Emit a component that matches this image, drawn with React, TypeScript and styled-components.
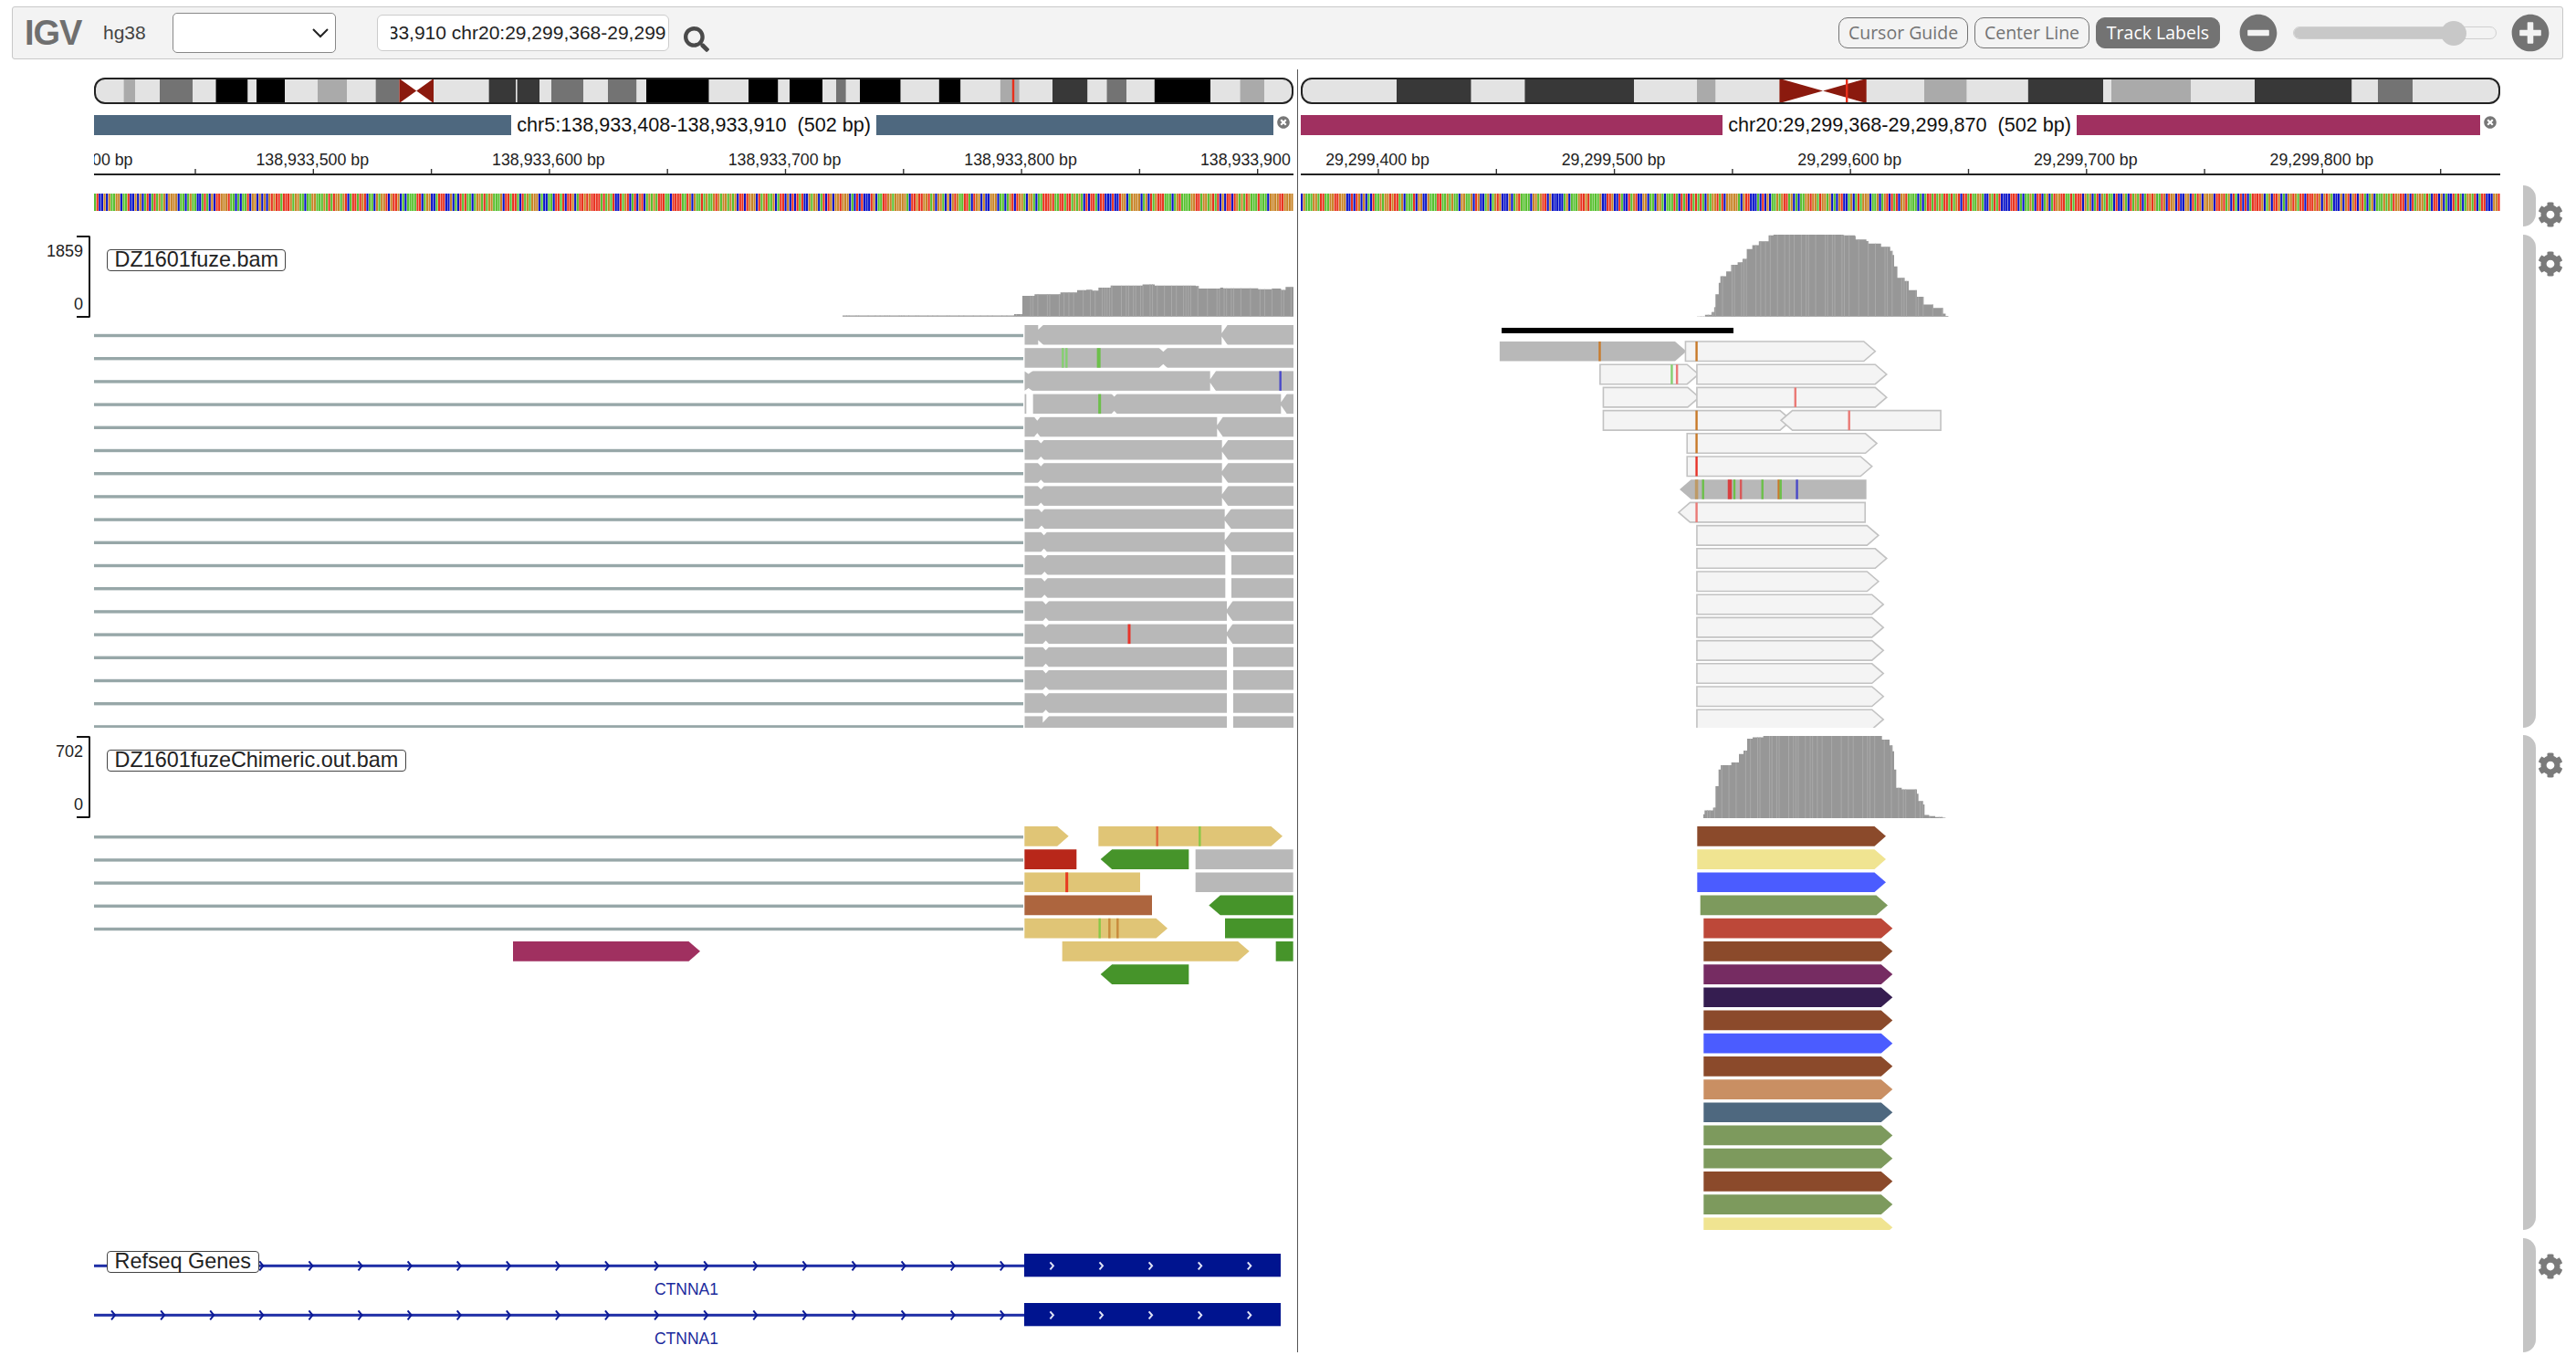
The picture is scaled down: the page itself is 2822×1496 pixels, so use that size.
import React from 'react';
import styled, {createGlobalStyle} from 'styled-components';
import {FaCog, FaMinusCircle, FaPlusCircle, FaSearch, FaTimesCircle} from 'react-icons/fa';

const LEFT_X = 103;
const RIGHT_X = 1425;
const PANEL_W = 1314;
const BP_W = PANEL_W / 502;

// band colours
const L = '#e3e3e3';
const M = '#aaaaaa';
const D = '#737373';
const H = '#383838';
const K = '#000000';
const CENTRO = '#8b1a0e';

const GRAY_READ = '#b8b8b8';
const TAN = '#e0c576';
const GREEN = '#46942a';
const BROWN = '#8b4a2b';
const KHAKI = '#f0e491';
const BLUE = '#4b5cff';
const OLIVE = '#7d9a5d';
const SLATE = '#4e687f';
const MAGENTA = '#a03060';

const MARK_GREEN = '#6cc04a';
const MARK_RED = '#e8342a';
const MARK_PINK = '#ea7a76';
const MARK_ORANGE = '#c87a2a';
const MARK_BLUE = '#4a4ac8';

type Seg = [number, string];

const leftBands: Seg[] = [
  [135.5, L], [148, M], [175, L], [211, D], [236.5, L], [271.5, K], [281, L], [312, K], [348, L],
  [380, M], [411.6, L], [437.4, D], [475, '#fff'], [535.6, L], [565, H], [566.6, L], [591, H],
  [604, L], [639, D], [666, L], [697.5, D], [708, L], [776.7, K], [820, L], [852.5, K], [865, L],
  [901, K], [916, L], [926.8, D], [942, L], [986.7, K], [1028.8, L], [1052.4, K], [1095.8, L],
  [1116.8, M], [1153, L], [1191.5, H], [1212.5, L], [1234, D], [1264.8, L], [1326, K], [1358.5, L],
  [1385, M], [1417, L],
];

const rightBands: Seg[] = [
  [1530, L], [1611.7, H], [1670.4, L], [1790, H], [1859, L], [1879.6, M], [1949.4, L],
  [2044.7, '#fff'], [2108, L], [2154.7, M], [2221.8, L], [2304, H], [2313, L], [2400, M],
  [2470, L], [2576.5, H], [2605, L], [2643, D], [2739, L],
];

const rng = (seed: number) => () => {
  seed = (seed * 1664525 + 1013904223) % 4294967296;
  return seed / 4294967296;
};

const baseColors = ['#58c030', '#0a14c8', '#c88428', '#e8321e'];

const makeBases = (seed: number) => {
  const r = rng(seed);
  return Array.from({length: 502}, () => baseColors[Math.floor(r() * 4)]);
};

const leftBases = makeBases(17);
const rightBases = makeBases(91);

// --- bam reads, left panel. measured off a 3x / 2.8x crop so kept in crop px
const cx = (p: number) => 1080 + p / 3;
const READ_H = 21.5;
const rowTop = (k: number) => 356 + 25.2 * k;

type Notch = {kind: 'L' | 'X' | 'gap'; a: number; b: number; d?: number};
type Mark = {at: number; color: string; w?: number};

const leftRows: {notches: Notch[]; marks?: Mark[]}[] = [
  {notches: [{kind: 'L', a: 172, b: 190, d: 5}, {kind: 'L', a: 775, b: 795, d: 9}]},
  {
    notches: [{kind: 'X', a: 568, b: 598, d: 4}],
    marks: [{at: 253, color: '#85cf70'}, {at: 265, color: '#85cf70'}, {at: 371, color: MARK_GREEN, w: 4}],
  },
  {notches: [{kind: 'X', a: 125, b: 155, d: 3}, {kind: 'L', a: 737, b: 757, d: 9}], marks: [{at: 968, color: MARK_BLUE}]},
  {
    notches: [{kind: 'gap', a: 133, b: 155}, {kind: 'X', a: 412, b: 432, d: 3}, {kind: 'L', a: 970, b: 990, d: 9}],
    marks: [{at: 374, color: MARK_GREEN, w: 3}],
  },
  {notches: [{kind: 'X', a: 158, b: 180, d: 4}, {kind: 'L', a: 760, b: 780, d: 9}]},
  {notches: [{kind: 'X', a: 170, b: 192, d: 3.5}, {kind: 'L', a: 776, b: 797, d: 9}]},
  {notches: [{kind: 'X', a: 170, b: 192, d: 3.5}, {kind: 'L', a: 776, b: 797, d: 9}]},
  {notches: [{kind: 'X', a: 170, b: 192, d: 3.5}, {kind: 'L', a: 776, b: 797, d: 9}]},
  {notches: [{kind: 'X', a: 172, b: 194, d: 3.5}, {kind: 'L', a: 785, b: 807, d: 9}]},
  {notches: [{kind: 'X', a: 180, b: 202, d: 3.5}, {kind: 'L', a: 785, b: 807, d: 9}]},
  {notches: [{kind: 'X', a: 182, b: 204, d: 3.5}, {kind: 'gap', a: 787, b: 807}]},
  {notches: [{kind: 'X', a: 182, b: 204, d: 3.5}, {kind: 'gap', a: 787, b: 807}]},
  {notches: [{kind: 'X', a: 186, b: 208, d: 3.5}, {kind: 'L', a: 792, b: 812, d: 9}]},
  {notches: [{kind: 'X', a: 186, b: 208, d: 3.5}, {kind: 'L', a: 792, b: 812, d: 9}], marks: [{at: 471, color: MARK_RED, w: 3}]},
  {notches: [{kind: 'X', a: 186, b: 208, d: 3.5}, {kind: 'gap', a: 792, b: 813}]},
  {notches: [{kind: 'X', a: 186, b: 208, d: 3.5}, {kind: 'gap', a: 792, b: 813}]},
  {notches: [{kind: 'X', a: 186, b: 208, d: 3.5}, {kind: 'gap', a: 792, b: 813}]},
  {notches: [{kind: 'L', a: 187, b: 208, d: 7}, {kind: 'gap', a: 792, b: 813}]},
];

// --- bam reads, right panel
const rx = (p: number) => 1600 + p / 2.8;
const rightRowTop = (k: number) => 374 + 25.2 * k;

type Read = {
  from: number;
  to: number;
  dir?: 'R' | 'L';
  filled?: boolean;
  marks?: Mark[];
};

const rightRows: Read[][] = [
  [
    {from: 120, to: 693, dir: 'R', filled: true, marks: [{at: 427, color: MARK_ORANGE}]},
    {from: 690, to: 1272, dir: 'R', marks: [{at: 724, color: MARK_ORANGE}]},
  ],
  [
    {from: 428, to: 730, dir: 'R', marks: [{at: 648, color: '#85cf70'}, {at: 664, color: MARK_PINK}]},
    {from: 725, to: 1307, dir: 'R'},
  ],
  [{from: 438, to: 732, dir: 'R'}, {from: 725, to: 1307, dir: 'R', marks: [{at: 1027, color: MARK_PINK}]}],
  [
    {from: 438, to: 1015, dir: 'R', marks: [{at: 724, color: MARK_ORANGE}]},
    {from: 983, to: 1473, dir: 'L', marks: [{at: 1192, color: MARK_PINK}]},
  ],
  [{from: 695, to: 1277, dir: 'R', marks: [{at: 724, color: MARK_ORANGE}]}],
  [{from: 695, to: 1262, dir: 'R', marks: [{at: 724, color: MARK_RED}]}],
  [
    {
      from: 672,
      to: 1245,
      dir: 'L',
      filled: true,
      marks: [
        {at: 724, color: '#bd9a66', w: 3.5},
        {at: 744, color: MARK_GREEN},
        {at: 826, color: '#d84040', w: 4.5},
        {at: 840, color: MARK_GREEN},
        {at: 860, color: '#d85a5a'},
        {at: 926, color: MARK_GREEN},
        {at: 976, color: MARK_ORANGE},
        {at: 982, color: MARK_GREEN},
        {at: 1032, color: MARK_BLUE},
      ],
    },
  ],
  [{from: 669, to: 1241, dir: 'L', marks: [{at: 724, color: MARK_PINK}]}],
  [{from: 725, to: 1282, dir: 'R'}],
  [{from: 725, to: 1307, dir: 'R'}],
  [{from: 725, to: 1282, dir: 'R'}],
  [{from: 725, to: 1297, dir: 'R'}],
  [{from: 725, to: 1297, dir: 'R'}],
  [{from: 725, to: 1297, dir: 'R'}],
  [{from: 725, to: 1297, dir: 'R'}],
  [{from: 725, to: 1297, dir: 'R'}],
  [{from: 725, to: 1297, dir: 'R'}],
];

// --- chimeric reads
const chimTop = (k: number) => 905 + 25.2 * k;

type ChimRead = {from: number; to: number; dir?: 'R' | 'L'; color: string; marks?: Mark[]};

const chimLeft: ChimRead[][] = [
  [
    {from: 127, to: 272, dir: 'R', color: TAN},
    {from: 370, to: 975, dir: 'R', color: TAN, marks: [{at: 563, color: '#e06a3c'}, {at: 703, color: '#88c848'}]},
  ],
  [
    {from: 127, to: 298, color: '#b8271a'},
    {from: 377, to: 667, dir: 'L', color: GREEN},
    {from: 689, to: 1010, color: GRAY_READ},
  ],
  [
    {from: 127, to: 507, color: TAN, marks: [{at: 266, color: '#e83a20', w: 3}]},
    {from: 689, to: 1010, color: GRAY_READ},
  ],
  [
    {from: 127, to: 546, color: '#ad653e'},
    {from: 733, to: 1010, dir: 'L', color: GREEN},
  ],
  [
    {
      from: 127,
      to: 597,
      dir: 'R',
      color: TAN,
      marks: [{at: 374, color: '#88c848'}, {at: 406, color: '#c88a3c'}, {at: 433, color: '#c88a3c'}],
    },
    {from: 786, to: 1010, color: GREEN},
  ],
  [
    {from: 251, to: 866, dir: 'R', color: TAN},
    {from: 953, to: 1010, color: GREEN},
  ],
  [{from: 377, to: 667, dir: 'L', color: GREEN}],
];

const chimRightColors = [
  BROWN, KHAKI, BLUE, OLIVE, '#bd4839', BROWN, '#762c62', '#351d50', BROWN, BLUE, BROWN, '#c98f63', SLATE, OLIVE,
  OLIVE, BROWN, OLIVE, KHAKI,
];

// --- coverage profiles [x, top]
const covLeft: [number, number][] = [
  [923, 345.6], [1110, 345.6], [1111, 344],
  ...([
    [120, 235], [160, 230], [245, 225], [300, 218], [330, 216], [350, 219], [370, 210], [410, 204], [515, 200],
    [555, 204], [690, 205], [700, 213], [770, 210], [780, 212], [895, 215], [940, 213], [970, 217], [985, 208],
  ] as [number, number][]).map(([p, q]): [number, number] => [cx(p), 240 + q / 2.8]),
];

const covRight: [number, number][] = ([
  [725, 298], [750, 293], [770, 285], [778, 270], [782, 230], [792, 195], [797, 175], [815, 160], [830, 140],
  [850, 132], [865, 122], [878, 92], [895, 80], [915, 68], [945, 50], [960, 47], [1170, 47], [1175, 50], [1210, 52],
  [1212, 62], [1245, 67], [1250, 75], [1290, 85], [1318, 97], [1325, 110], [1330, 145], [1340, 180], [1362, 190],
  [1375, 218], [1400, 238], [1420, 262], [1450, 272], [1480, 290], [1488, 297],
] as [number, number][]).map(([p, q]) => [rx(p), 240 + q / 2.8]);

const covChim: [number, number][] = ([
  [138, 280], [142, 268], [170, 260], [178, 195], [188, 145], [195, 132], [230, 124], [255, 98], [270, 88], [282, 52],
  [300, 48], [335, 44], [720, 44], [725, 55], [750, 72], [760, 90], [765, 145], [772, 200], [790, 205], [840, 218],
  [845, 240], [860, 250], [865, 282], [880, 285], [900, 288], [925, 290],
] as [number, number][]).map(([p, q]) => [1820 + p / 3, 790 + q / 2.75]);

const tickXs = (start: number) => Array.from({length: 10}, (_, i) => start + 129.3 * i);

const geneArrows = Array.from({length: 24}, (_, i) => 124 + 54.1 * i);

const GlobalStyle = createGlobalStyle`
  html, body {
    margin: 0;
    padding: 0;
    background: #fff;
  }
  body {
    width: 2822px;
    height: 1496px;
    overflow: hidden;
    font-family: "Liberation Sans", Arial, sans-serif;
    color: #222;
  }
`;

const Page = styled.div`
  position: relative;
  width: 2822px;
  height: 1496px;
  overflow: hidden;
`;

const Navbar = styled.header`
  box-sizing: border-box;
  display: flex;
  align-items: center;
  height: 58px;
  margin: 7px 14px 0 13px;
  padding: 0 14px 0 13px;
  background: #f3f3f3;
  border: 1.5px solid #c8c8c8;
  border-radius: 3px;
`;

const Logo = styled.div`
  width: 62px;
  font-size: 38px;
  font-weight: 700;
  letter-spacing: -1px;
  color: #6f6f6f;
`;

const Genome = styled.div`
  margin-left: 24px;
  font-size: 21px;
  color: #444;
`;

const SelectBox = styled.div`
  box-sizing: border-box;
  display: flex;
  align-items: center;
  justify-content: flex-end;
  width: 179px;
  height: 44px;
  margin-left: 29px;
  padding-right: 6px;
  background: #fff;
  border: 1px solid #888;
  border-radius: 5px;
`;

const LocusBox = styled.div`
  box-sizing: border-box;
  width: 320px;
  height: 40px;
  margin-left: 45px;
  padding: 0 3px 0 14px;
  background: #fff;
  border: 1px solid #ccc;
  border-radius: 6px;
`;

const LocusClip = styled.div`
  overflow: hidden;
  white-space: nowrap;
  font-size: 21px;
  line-height: 38px;
  color: #222;
`;

const LocusText = styled.span`
  margin-left: -226px;
`;

const SearchIcon = styled(FaSearch)`
  width: 28px;
  height: 28px;
  margin: 14px 0 0 16px;
  color: #4a4a4a;
`;

const NavRight = styled.div`
  display: flex;
  align-items: center;
  margin-left: auto;
`;

const ToggleButton = styled.div<{$on?: boolean; $width: number}>`
  box-sizing: border-box;
  width: ${p => p.$width}px;
  height: 34px;
  margin-right: 7px;
  text-align: center;
  font-family: "Open Sans", sans-serif;
  font-size: 19.5px;
  line-height: 32px;
  border: 1px solid #737373;
  border-radius: 10px;
  color: ${p => (p.$on ? '#fff' : '#737373')};
  background: ${p => (p.$on ? '#737373' : 'transparent')};
`;

const ZoomOut = styled(FaMinusCircle)`
  width: 42px;
  height: 42px;
  margin-left: 14px;
  color: #737373;
`;

const ZoomIn = styled(FaPlusCircle)`
  width: 42px;
  height: 42px;
  color: #737373;
`;

const SliderTrack = styled.div`
  position: relative;
  box-sizing: border-box;
  width: 223px;
  height: 14px;
  margin: 0 16px 0 17px;
  background: #f3f3f3;
  border: 1px solid #d0d0d0;
  border-radius: 7px;
`;

const SliderFill = styled.div<{$pct: number}>`
  height: 100%;
  width: ${p => p.$pct}%;
  background: #c8c8c8;
  border-radius: 7px 0 0 7px;
`;

const SliderThumb = styled.div<{$pct: number}>`
  position: absolute;
  top: -7px;
  left: ${p => p.$pct}%;
  width: 28px;
  height: 27px;
  margin-left: -14px;
  background: #c8c8c8;
  border-radius: 50%;
`;

const Divider = styled.div`
  position: absolute;
  left: 1421px;
  top: 76px;
  width: 1px;
  height: 1405px;
  background: #555;
`;

const PanelRow = styled.div<{$top: number; $height: number}>`
  display: flex;
  margin: ${p => p.$top}px 0 0 ${LEFT_X}px;
  height: ${p => p.$height}px;
`;

const Cell = styled.div`
  width: ${PANEL_W}px;
  & + & {
    margin-left: 8px;
  }
`;

const RegionCell = styled(Cell)`
  display: flex;
  align-items: stretch;
`;

const RegionBar = styled.div<{$color: string; $width?: number}>`
  background: ${p => p.$color};
  ${p => (p.$width ? `width: ${p.$width}px;` : 'flex: 1;')}
`;

const RegionText = styled.div`
  margin: 0 6px 0 6px;
  font-size: 21.6px;
  line-height: 22px;
  white-space: pre;
  color: #111;
`;

const CloseIcon = styled(FaTimesCircle)`
  width: 14px;
  height: 14px;
  margin: 1px 4px 0 4px;
  color: #777;
`;

const PlotSvg = styled.svg`
  display: block;
`;

const RulerLabel = styled.text`
  font-family: "Liberation Sans", Arial, sans-serif;
  font-size: 17.8px;
  fill: #222;
  text-anchor: middle;
`;

const GeneName = styled.text`
  font-family: "Liberation Sans", Arial, sans-serif;
  font-size: 17.5px;
  fill: #1c2a9c;
  text-anchor: middle;
`;

const TrackRow = styled.section<{$top: number; $height: number}>`
  display: flex;
  height: ${p => p.$height}px;
  margin-top: ${p => p.$top}px;
`;

const AxisCell = styled.div`
  display: flex;
  justify-content: flex-end;
  width: ${LEFT_X}px;
`;

const AxisBracket = styled.div`
  box-sizing: border-box;
  display: flex;
  flex-direction: column;
  justify-content: space-between;
  align-items: flex-end;
  width: 15px;
  height: 90px;
  margin: 1px 4px 0 0;
  padding: 5px 6px 3px 0;
  border: solid #111;
  border-width: 2px 2px 2px 0;
  border-radius: 0 2px 2px 0;
  font-size: 18px;
  line-height: 20px;
  color: #222;
`;

const TrackPanel = styled.div`
  position: relative;
  flex: none;
  width: ${PANEL_W}px;
  height: 100%;
  overflow: hidden;
  & + & {
    margin-left: 8px;
  }
`;

const SequencePanel = styled(TrackPanel)`
  padding-top: 9px;
`;

const TrackLabel = styled.div<{$top: number}>`
  position: absolute;
  left: 14px;
  top: ${p => p.$top}px;
  box-sizing: border-box;
  height: 24px;
  padding: 0 7.5px;
  font-size: 23.4px;
  line-height: 21px;
  white-space: nowrap;
  color: #222;
  background: #fff;
  border: 1px solid #444;
  border-radius: 4px;
`;

const SideControl = styled.div<{$gearTop: number}>`
  display: flex;
  align-items: flex-start;
  margin-left: 25px;
  height: 100%;
  color: #7a7a7a;
  & > svg {
    width: 28px;
    height: 28px;
    margin: ${p => p.$gearTop}px 0 0 2px;
  }
`;

const SideBar = styled.div`
  width: 14px;
  height: 100%;
  background: #c4c4c4;
  border-radius: 0 14px 14px 0;
`;

const Plot: React.FC<{x: number; y: number; w: number; h: number; children: React.ReactNode}> = ({
  x,
  y,
  w,
  h,
  children,
}) => (
  <PlotSvg width={w} height={h} viewBox={`${x} ${y} ${w} ${h}`}>
    {children}
  </PlotSvg>
);

const Ideogram: React.FC<{id: string; x: number; bands: Seg[]; centro: [number, number]; mark: number}> = ({
  id,
  x,
  bands,
  centro,
  mark,
}) => {
  const mid = (centro[0] + centro[1]) / 2;
  let prev = x;
  return (
    <Plot x={x} y={85} w={PANEL_W} h={29}>
      <defs>
        <clipPath id={id}>
          <rect x={x + 1} y={86} width={PANEL_W - 2} height={27} rx={11} />
        </clipPath>
      </defs>
      <g clipPath={`url(#${id})`}>
        {bands.map(([end, color]) => {
          const rect = <rect key={end} x={prev} y={85} width={end - prev} height={29} fill={color} />;
          prev = end;
          return rect;
        })}
        <polygon points={`${centro[0]},86 ${mid},99.5 ${centro[0]},113`} fill={CENTRO} />
        <polygon points={`${centro[1]},86 ${mid},99.5 ${centro[1]},113`} fill={CENTRO} />
        <rect x={mark - 1} y={85} width={2.4} height={29} fill="#e8301c" />
      </g>
      <rect
        x={x + 1}
        y={86}
        width={PANEL_W - 2}
        height={27}
        rx={11}
        fill="none"
        stroke="#222"
        strokeWidth={2}
      />
    </Plot>
  );
};

const Ruler: React.FC<{x: number; ticks: number[]; labels: [number, string][]}> = ({x, ticks, labels}) => (
  <Plot x={x} y={160} w={PANEL_W} h={35}>
    {labels.map(([at, text]) => (
      <RulerLabel key={text} x={at - 1} y={181}>
        {text}
      </RulerLabel>
    ))}
    {ticks.map(t => (
      <rect key={t} x={t - 0.7} y={185} width={1.4} height={6} fill="#333" />
    ))}
    <rect x={x} y={190} width={PANEL_W} height={2} fill="#222" />
  </Plot>
);

const Sequence: React.FC<{bases: string[]}> = ({bases}) => (
  <Plot x={0} y={0} w={PANEL_W} h={19}>
    {bases.map((c, i) => (
      <rect key={i} x={i * BP_W} y={0} width={BP_W - 0.45} height={19} fill={c} />
    ))}
  </Plot>
);

const Coverage: React.FC<{points: [number, number][]; base: number; seed: number; end?: number}> = ({
  points,
  base,
  seed,
  end,
}) => {
  const last = end ?? points[points.length - 1][0] + 3;
  const pts: string[] = [`${points[0][0]},${base}`];
  points.forEach(([x, y], i) => {
    if (i > 0) pts.push(`${x},${points[i - 1][1]}`);
    pts.push(`${x},${y}`);
  });
  pts.push(`${last},${points[points.length - 1][1]}`, `${last},${base}`);

  const topAt = (x: number) => {
    let top = points[0][1];
    for (const [px, py] of points) {
      if (px <= x) top = py;
    }
    return top;
  };
  const r = rng(seed);
  const stripes: number[] = [];
  for (let x = points[0][0] + 4; x < last; x += BP_W * (1 + Math.floor(r() * 4))) {
    stripes.push(x);
  }
  return (
    <>
      <polygon points={pts.join(' ')} fill="#979797" />
      {stripes.map(x => (
        <rect key={x} x={x} y={topAt(x)} width={1} height={base - topAt(x)} fill="#a9a9a9" />
      ))}
    </>
  );
};

const MarkBar: React.FC<{x: number; y: number; m: Mark; scale: (p: number) => number; h: number}> = ({
  x,
  y,
  m,
  scale,
  h,
}) => {
  const w = m.w ?? 2.4;
  return <rect x={scale(m.at) - w / 2 + x} y={y} width={w} height={h} fill={m.color} />;
};

const LeftBamReads: React.FC = () => (
  <>
    {leftRows.map((row, k) => {
      const t = rowTop(k);
      const b = t + READ_H;
      return (
        <g key={k}>
          <rect x={LEFT_X} y={t + 9.8} width={1018} height={3.4} fill="#97a7a8" />
          <rect x={1122.5} y={t} width={295} height={READ_H} fill={GRAY_READ} />
          {row.notches.map((n, i) => {
            const a = cx(n.a);
            const e = cx(n.b);
            if (n.kind === 'gap') {
              return <rect key={i} x={a} y={t - 1} width={e - a} height={READ_H + 2} fill="#fff" />;
            }
            const d = n.d ?? 4;
            const apex = n.kind === 'L' ? a : (a + e) / 2;
            return (
              <g key={i} fill="#fff">
                <polygon points={`${a},${t - 0.5} ${e},${t - 0.5} ${apex},${t + d}`} />
                <polygon points={`${a},${b + 0.5} ${e},${b + 0.5} ${apex},${b - d}`} />
              </g>
            );
          })}
          {row.marks?.map((m, i) => (
            <MarkBar key={i} x={0} y={t} m={m} scale={cx} h={READ_H} />
          ))}
        </g>
      );
    })}
  </>
);

const arrowPoints = (x1: number, x2: number, t: number, h: number, dir?: 'R' | 'L', tip = 12.5) => {
  const b = t + h;
  const m = t + h / 2;
  if (dir === 'R') return `${x1},${t} ${x2 - tip},${t} ${x2},${m} ${x2 - tip},${b} ${x1},${b}`;
  if (dir === 'L') return `${x1 + tip},${t} ${x2},${t} ${x2},${b} ${x1 + tip},${b} ${x1},${m}`;
  return `${x1},${t} ${x2},${t} ${x2},${b} ${x1},${b}`;
};

const RightBamReads: React.FC = () => (
  <>
    <rect x={1645} y={359} width={254} height={6} fill="#000" />
    {rightRows.map((row, k) => {
      const t = rightRowTop(k);
      return (
        <g key={k}>
          {row.map((read, i) => (
            <g key={i}>
              <polygon
                points={arrowPoints(rx(read.from), rx(read.to), t, READ_H, read.dir)}
                fill={read.filled ? GRAY_READ : '#f4f4f4'}
                stroke={read.filled ? 'none' : '#c2c2c2'}
                strokeWidth={1.6}
              />
              {read.marks?.map((m, j) => (
                <MarkBar key={j} x={0} y={t} m={m} scale={rx} h={READ_H} />
              ))}
            </g>
          ))}
        </g>
      );
    })}
  </>
);

const LeftChimericReads: React.FC = () => (
  <>
    {[0, 1, 2, 3, 4].map(k => (
      <rect key={k} x={LEFT_X} y={chimTop(k) + 10} width={1018} height={3.4} fill="#97a7a8" />
    ))}
    <polygon points={arrowPoints(562, 767, chimTop(5), 21.7, 'R')} fill={MAGENTA} />
    {chimLeft.map((row, k) => (
      <g key={k}>
        {row.map((read, i) => (
          <g key={i}>
            <polygon points={arrowPoints(cx(read.from), cx(read.to), chimTop(k), 21.7, read.dir)} fill={read.color} />
            {read.marks?.map((m, j) => (
              <MarkBar key={j} x={0} y={chimTop(k)} m={m} scale={cx} h={21.7} />
            ))}
          </g>
        ))}
      </g>
    ))}
  </>
);

const RightChimericReads: React.FC = () => (
  <>
    {chimRightColors.map((color, k) => {
      const from = k < 3 ? 1859.3 : k === 3 ? 1862.7 : 1866.3;
      const to = k < 3 ? 2066 : k === 3 ? 2068 : 2073.3;
      return <polygon key={k} points={arrowPoints(from, to, chimTop(k), 21.7, 'R')} fill={color} />;
    })}
  </>
);

const GeneRow: React.FC<{lineY: number}> = ({lineY}) => (
  <>
    <rect x={LEFT_X} y={lineY - 1.5} width={1020} height={3} fill="#1f2ea6" />
    {geneArrows
      .filter(x => x < 1122)
      .map(x => (
        <polyline
          key={x}
          points={`${x - 2},${lineY - 5} ${x + 2},${lineY} ${x - 2},${lineY + 5}`}
          fill="none"
          stroke="#0c1a96"
          strokeWidth={2}
        />
      ))}
    <rect x={1122} y={lineY - 13.3} width={281} height={25.3} fill="#00148f" />
    {geneArrows
      .filter(x => x > 1122)
      .map(x => (
        <polyline
          key={x}
          points={`${x - 1.5},${lineY - 4} ${x + 2},${lineY} ${x - 1.5},${lineY + 4}`}
          fill="none"
          stroke="#dfe3f5"
          strokeWidth={2}
        />
      ))}
    <GeneName x={752} y={lineY + 31.5}>
      CTNNA1
    </GeneName>
  </>
);

const ChevronDown: React.FC = () => (
  <svg width={20} height={12} viewBox="0 0 20 12">
    <path d="M2 2 L10 10 L18 2" fill="none" stroke="#222" strokeWidth={2} />
  </svg>
);

const App: React.FC = () => {
  const leftTicks = tickXs(214);
  const rightTicks = tickXs(1510);
  return (
    <Page>
      <GlobalStyle />
      <Navbar>
        <Logo>IGV</Logo>
        <Genome>hg38</Genome>
        <SelectBox>
          <ChevronDown />
        </SelectBox>
        <LocusBox>
          <LocusClip>
            <LocusText>chr5:138,933,408-138,933,910 chr20:29,299,368-29,299,870</LocusText>
          </LocusClip>
        </LocusBox>
        <SearchIcon />
        <NavRight>
          <ToggleButton $width={142}>Cursor Guide</ToggleButton>
          <ToggleButton $width={126}>Center Line</ToggleButton>
          <ToggleButton $on $width={136}>
            Track Labels
          </ToggleButton>
          <ZoomOut />
          <SliderTrack>
            <SliderFill $pct={79} />
            <SliderThumb $pct={79} />
          </SliderTrack>
          <ZoomIn />
        </NavRight>
      </Navbar>

      <PanelRow $top={20} $height={28}>
        <Cell>
          <Ideogram id="chr5" x={LEFT_X} bands={leftBands} centro={[437.4, 475]} mark={1109.8} />
        </Cell>
        <Cell>
          <Ideogram id="chr20" x={RIGHT_X} bands={rightBands} centro={[1949.4, 2044.7]} mark={2023} />
        </Cell>
      </PanelRow>

      <PanelRow $top={13} $height={22}>
        <RegionCell>
          <RegionBar $color={SLATE} />
          <RegionText>chr5:138,933,408-138,933,910  (502 bp)</RegionText>
          <RegionBar $color={SLATE} $width={435} />
          <CloseIcon />
        </RegionCell>
        <RegionCell>
          <RegionBar $color={MAGENTA} />
          <RegionText>chr20:29,299,368-29,299,870  (502 bp)</RegionText>
          <RegionBar $color={MAGENTA} $width={442} />
          <CloseIcon />
        </RegionCell>
      </PanelRow>

      <PanelRow $top={12} $height={35}>
        <Cell>
          <Ruler
            x={LEFT_X}
            ticks={leftTicks}
            labels={[
              [84.7, '138,933,400 bp'],
              [leftTicks[1], '138,933,500 bp'],
              [leftTicks[3], '138,933,600 bp'],
              [leftTicks[5], '138,933,700 bp'],
              [leftTicks[7], '138,933,800 bp'],
              [leftTicks[9], '138,933,900 bp'],
            ]}
          />
        </Cell>
        <Cell>
          <Ruler
            x={RIGHT_X}
            ticks={rightTicks}
            labels={[
              [rightTicks[0], '29,299,400 bp'],
              [rightTicks[2], '29,299,500 bp'],
              [rightTicks[4], '29,299,600 bp'],
              [rightTicks[6], '29,299,700 bp'],
              [rightTicks[8], '29,299,800 bp'],
            ]}
          />
        </Cell>
      </PanelRow>

      <TrackRow $top={8} $height={45}>
        <AxisCell />
        <SequencePanel>
          <Sequence bases={leftBases} />
        </SequencePanel>
        <SequencePanel>
          <Sequence bases={rightBases} />
        </SequencePanel>
        <SideControl $gearTop={18}>
          <SideBar />
          <FaCog />
        </SideControl>
      </TrackRow>

      <TrackRow $top={9} $height={540}>
        <AxisCell>
          <AxisBracket>
            <span>1859</span>
            <span>0</span>
          </AxisBracket>
        </AxisCell>
        <TrackPanel>
          <Plot x={LEFT_X} y={257} w={PANEL_W} h={540}>
            <Coverage points={covLeft} base={346.8} seed={5} end={1417} />
            <LeftBamReads />
          </Plot>
          <TrackLabel $top={16}>DZ1601fuze.bam</TrackLabel>
        </TrackPanel>
        <TrackPanel>
          <Plot x={RIGHT_X} y={257} w={PANEL_W} h={540}>
            <Coverage points={covRight} base={346.8} seed={11} />
            <RightBamReads />
          </Plot>
        </TrackPanel>
        <SideControl $gearTop={18}>
          <SideBar />
          <FaCog />
        </SideControl>
      </TrackRow>

      <TrackRow $top={8} $height={542}>
        <AxisCell>
          <AxisBracket>
            <span>702</span>
            <span>0</span>
          </AxisBracket>
        </AxisCell>
        <TrackPanel>
          <Plot x={LEFT_X} y={805} w={PANEL_W} h={542}>
            <LeftChimericReads />
          </Plot>
          <TrackLabel $top={16}>DZ1601fuzeChimeric.out.bam</TrackLabel>
        </TrackPanel>
        <TrackPanel>
          <Plot x={RIGHT_X} y={805} w={PANEL_W} h={542}>
            <Coverage points={covChim} base={896} seed={23} />
            <RightChimericReads />
          </Plot>
        </TrackPanel>
        <SideControl $gearTop={19}>
          <SideBar />
          <FaCog />
        </SideControl>
      </TrackRow>

      <TrackRow $top={9} $height={125}>
        <AxisCell />
        <TrackPanel>
          <Plot x={LEFT_X} y={1356} w={PANEL_W} h={125}>
            <GeneRow lineY={1386.3} />
            <GeneRow lineY={1440.3} />
          </Plot>
          <TrackLabel $top={14}>Refseq Genes</TrackLabel>
        </TrackPanel>
        <TrackPanel />
        <SideControl $gearTop={17}>
          <SideBar />
          <FaCog />
        </SideControl>
      </TrackRow>

      <Divider />
    </Page>
  );
};

export default App;
